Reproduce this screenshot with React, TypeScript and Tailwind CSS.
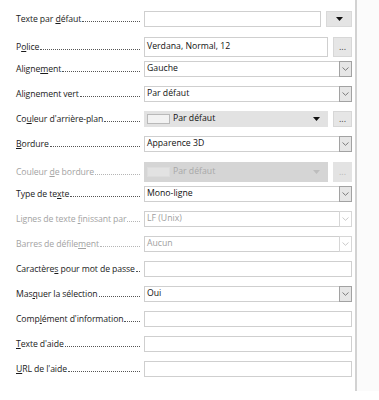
import type { ReactNode } from 'react'

const FONT = { fontFamily: '"Open Sans", "Noto Sans", sans-serif' }

function Chevron({ dim }: { dim?: boolean }) {
  return (
    <svg width="7" height="4" viewBox="0 0 7 4" fill="none">
      <path d="M0.5 0.5 L3.5 3.3 L6.5 0.5" stroke={dim ? '#c4c4c4' : '#6f6f6f'} strokeWidth="0.9" />
    </svg>
  )
}

function Tri({ dim }: { dim?: boolean }) {
  return (
    <svg width="7" height="4" viewBox="0 0 7 4">
      <path d="M0 0 H7 L3.5 4 Z" fill={dim ? '#bdbdbd' : '#111'} />
    </svg>
  )
}

function Row({ label, disabled, tall, children }: { label: ReactNode; disabled?: boolean; tall?: boolean; children: ReactNode }) {
  return (
    <div className="h-[25px] flex items-start">
      <div className={`flex ${tall ? 'h-[20px] mt-px' : 'h-[16px]'} w-full items-center`}>
        <div className={`w-[144px] pl-[16px] pr-[4px] flex items-end text-[8.7px] leading-none tracking-[-0.1px] ${disabled ? 'text-[#a3a3a3]' : 'text-[#1b1b1b]'}`}>
          <span className="whitespace-nowrap">{label}</span>
          <span className={`flex-1 mb-[1px] ml-px border-b border-dotted ${disabled ? 'border-[#b5b5b5]' : 'border-[#555]'}`} />
        </div>
        <div className="flex-1 h-full flex pr-[3px]">{children}</div>
      </div>
    </div>
  )
}

function Input({ value }: { value?: string }) {
  return (
    <div className="flex-1 h-full border border-[#cfcfcf] bg-white flex items-center px-[2px] text-[8.7px] text-[#111]">
      {value}
    </div>
  )
}

function Select({ value, dim }: { value: string; dim?: boolean }) {
  return (
    <div className="flex-1 h-full border border-[#cfcfcf] bg-white flex items-center text-[8.7px]">
      <span className={`flex-1 px-[2px] ${dim ? 'text-[#a0a0a0]' : 'text-[#111]'}`}>{value}</span>
      <span className={`w-[13px] h-[16px] -mr-px flex items-center justify-center border ${dim ? 'border-[#d6d6d6] bg-white' : 'border-[#a2a2a2] bg-[#e6e6e6]'}`}>
        <Chevron dim={dim} />
      </span>
    </div>
  )
}

function Dots({ dim }: { dim?: boolean }) {
  return (
    <div className={`ml-[5px] w-[19px] h-full flex items-center justify-center border ${dim ? 'bg-[#e3e3e3] border-[#e3e3e3] text-[#b8b8b8]' : 'bg-[#e6e6e6] border-[#d7d7d7] text-[#444]'} text-[9px] leading-none`}>
      <span className="-mt-[1px]">...</span>
    </div>
  )
}

function ColorBox({ dim }: { dim?: boolean }) {
  return (
    <div className={`flex-1 h-full flex items-center pl-[3px] pr-[8px] ${dim ? 'bg-[#d5d5d5]' : 'bg-[#e2e2e2]'}`}>
      <span className={`w-[23px] h-[10px] border ${dim ? 'bg-[#e2e2e2] border-[#dcdcdc]' : 'bg-[#f2f2f2] border-[#b9b9b9]'}`} />
      <span className={`ml-[3px] flex-1 text-[8.7px] ${dim ? 'text-[#a8a8a8]' : 'text-[#111]'}`}>Par défaut</span>
      <Tri dim={dim} />
    </div>
  )
}

const u = (s: string) => <span className="underline underline-offset-1 decoration-[0.5px]">{s}</span>

export default function App() {
  return (
    <div className="w-[379px] h-[400px] bg-white flex" style={FONT}>
      <div className="w-[357px] h-[391px] border-r-2 border-[#d2d2d2] bg-white pt-[11px] flex flex-col">
        <Row label={<>Texte par {u('d')}éfaut</>}>
          <Input />
          <div className="ml-[5px] w-[26px] h-full bg-[#e4e4e4] border border-[#d9d9d9] flex items-center justify-center">
            <Tri />
          </div>
        </Row>
        <Row tall label={<>P{u('o')}lice</>}>
          <Input value="Verdana, Normal, 12" />
          <Dots />
        </Row>
        <Row label={<>Aligne{u('m')}ent</>}>
          <Select value="Gauche" />
        </Row>
        <Row label="Alignement vert">
          <Select value="Par défaut" />
        </Row>
        <Row label={<>Co{u('u')}leur d'arrière-plan</>}>
          <ColorBox />
          <Dots />
        </Row>
        <Row label={<>{u('B')}ordure</>}>
          <Select value="Apparence 3D" />
        </Row>
        <Row tall disabled label={<>Couleur {u('d')}e bordure</>}>
          <ColorBox dim />
          <Dots dim />
        </Row>
        <Row label={<>Type de te{u('x')}te</>}>
          <Select value="Mono-ligne" />
        </Row>
        <Row disabled label={<>Lignes de texte {u('f')}inissant par</>}>
          <Select value="LF (Unix)" dim />
        </Row>
        <Row disabled label={<>Barres de défile{u('m')}ent</>}>
          <Select value="Aucun" dim />
        </Row>
        <Row label={<>Caractère{u('s')} pour mot de passe</>}>
          <Input />
        </Row>
        <Row label={<>Mas{u('q')}uer la sélection</>}>
          <Select value="Oui" />
        </Row>
        <Row label={<>Comp{u('l')}ément d'information</>}>
          <Input />
        </Row>
        <Row label={<>{u('T')}exte d'aide</>}>
          <Input />
        </Row>
        <Row label={<>{u('U')}RL de l'aide</>}>
          <Input />
        </Row>
      </div>
      <div className="flex-1 h-[391px] bg-[#fbfbfb]" />
    </div>
  )
}
